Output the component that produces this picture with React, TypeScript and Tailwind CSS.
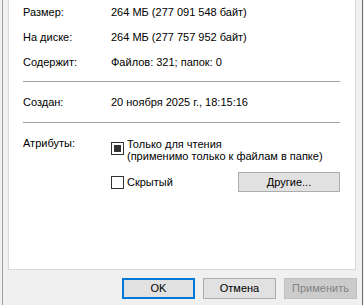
import { useState } from 'react';

const font = { fontFamily: '"Liberation Sans", Arial, sans-serif' };

const Checkbox = ({ state, onClick }: { state: 'on' | 'off' | 'mixed'; onClick: () => void }) => (
    <button
        type="button"
        onClick={onClick}
        className="w-[13px] h-[13px] shrink-0 border border-[#333333] bg-white flex items-center justify-center"
    >
        {state === 'mixed' && <span className="block w-[7px] h-[7px] bg-[#333333]" />}
        {state === 'on' && (
            <svg width="9" height="9" viewBox="0 0 9 9">
                <path d="M1 4.5 L3.5 7 L8 1.5" fill="none" stroke="#333" strokeWidth="1.4" />
            </svg>
        )}
    </button>
);

const Row = ({ label, value, className }: { label: string; value: string; className: string }) => (
    <div className={`flex h-[16px] leading-[16px] ${className}`}>
        <span className="w-[88px]">{label}</span>
        <span>{value}</span>
    </div>
);

const App = () => {
    const [readOnly, setReadOnly] = useState<'on' | 'off' | 'mixed'>('mixed');
    const [hidden, setHidden] = useState<'on' | 'off' | 'mixed'>('off');

    return (
        <div className="w-[364px] h-[305px] bg-[#f0f0f0] pl-[2px] pr-[1px] text-[11px] text-black" style={font}>
            <div className="h-full border-l border-r border-l-[#a0a0a0] border-r-[#6e6e6e] flex flex-col pl-[5px] pr-[6px]">
                {/* general tab panel, top edge is cut off */}
                <div className="h-[270px] bg-white border-x border-b border-[#d9d9d9] pl-[14px] pr-[15px] flex flex-col">
                    <Row label="Размер:" value="264 МБ (277 091 548 байт)" className="mt-[4px]" />
                    <Row label="На диске:" value="264 МБ (277 757 952 байт)" className="mt-[9px]" />
                    <Row label="Содержит:" value="Файлов: 321; папок: 0" className="mt-[9px]" />
                    <div className="h-px bg-[#a0a0a0] mt-[11px]" />
                    <Row label="Создан:" value="20 ноября 2025 г., 18:15:16" className="mt-[12px]" />
                    <div className="h-px bg-[#a0a0a0] mt-[12px]" />
                    <div className="flex mt-[12px]">
                        <span className="w-[88px] leading-[16px]">Атрибуты:</span>
                        <div className="flex-1 flex flex-col">
                            <div className="flex gap-[3px]">
                                <div className="pt-[7px]">
                                    <Checkbox state={readOnly} onClick={() => setReadOnly(readOnly === 'on' ? 'off' : 'on')} />
                                </div>
                                <div className="leading-[12px] pt-[3px]">
                                    <div>Только для чтения</div>
                                    <div>(применимо только к файлам в папке)</div>
                                </div>
                            </div>
                            <div className="flex items-center mt-[10px]">
                                <Checkbox state={hidden} onClick={() => setHidden(hidden === 'on' ? 'off' : 'on')} />
                                <span className="ml-[3px]">Скрытый</span>
                                <button type="button" className="ml-auto w-[102px] h-[20px] bg-[#e1e1e1] border border-[#adadad]">
                                    Другие...
                                </button>
                            </div>
                        </div>
                    </div>
                </div>
                <div className="flex justify-end gap-[8px] mt-[8px] -mr-[1px]">
                    <button type="button" className="w-[73px] h-[21px] bg-[#e1e1e1] border-2 border-[#0078d7]">OK</button>
                    <button type="button" className="w-[73px] h-[21px] bg-[#e1e1e1] border border-[#adadad]">Отмена</button>
                    <button type="button" disabled className="w-[73px] h-[21px] bg-[#cccccc] border border-[#bfbfbf] text-[#838383]">
                        Применить
                    </button>
                </div>
            </div>
        </div>
    );
};

export default App;
